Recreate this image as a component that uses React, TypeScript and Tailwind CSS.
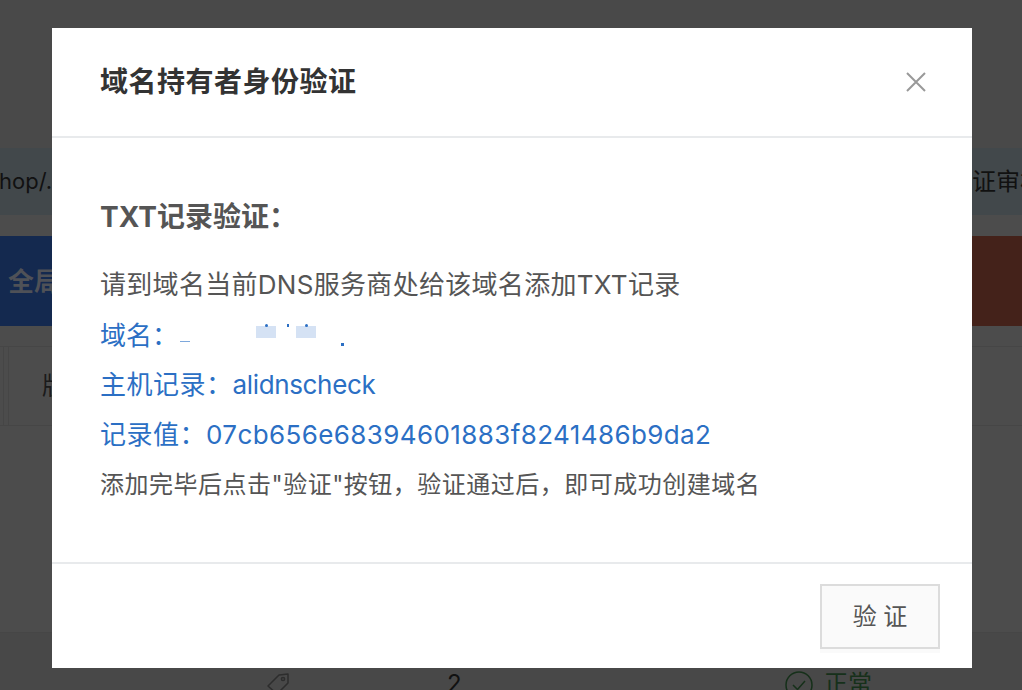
import React from "react";

const FONT = "font-['Inter','Noto_Sans_CJK_SC',sans-serif]";

function Background() {
  return (
    <div className="flex h-[690px] w-[1022px] flex-col overflow-hidden bg-[#4c4c4c]">
      <div className="h-[148px] shrink-0 bg-[#494949]" />
      <div className="flex h-[67px] shrink-0 items-center justify-between overflow-hidden bg-[#42484b] text-[24px] text-[#111]">
        <span className="-ml-[1px] whitespace-nowrap text-[22px]">hop/.</span>
        <span className="w-[50px] shrink-0 whitespace-nowrap">证审核</span>
      </div>
      <div className="h-[21px] shrink-0" />
      <div className="flex h-[90px] shrink-0 items-center justify-between bg-[linear-gradient(90deg,#14294f_0%,#14294f_50%,#44221a_50%,#44221a_100%)]">
        <span className="pl-2 text-[26px] font-bold text-[#4f5157]">全局</span>
      </div>
      <div className="h-[20px] shrink-0" />
      <div className="flex h-[80px] shrink-0 border-y border-[#464646]">
        <div className="w-[4px] border-r border-[#464646]" />
        <div className="ml-[4px] flex w-[100px] items-center border-l border-[#464646] pl-[33px] text-[24px] text-[#1a1a1a]">
          版本
        </div>
      </div>
      <div className="flex-1" />
      <div className="flex h-[58px] shrink-0 items-start border-t border-[#464646] bg-[#484848] pt-[34px] text-[24px] leading-[34px] text-[#111]">
        <svg className="ml-[266px] mt-[5px] h-[24px] w-[24px]" viewBox="0 0 24 24" fill="none" stroke="#2d2d2d" strokeWidth="1.5">
          <path d="M2 14 L13 3 L22 2 L22 11 L11 22 Z" strokeLinejoin="round" />
          <circle cx="17" cy="7" r="1.6" />
        </svg>
        <span className="ml-[157px] w-[27px]">2</span>
        <svg className="ml-[311px] mt-[4px] h-[28px] w-[28px]" viewBox="0 0 28 28" fill="none" stroke="#16301a" strokeWidth="1.5">
          <circle cx="14" cy="14" r="13" />
          <path d="M8 14 L12.5 18.5 L20 10" />
        </svg>
        <span className="ml-[11px] text-[#16301a]">正常</span>
      </div>
    </div>
  );
}

function Modal() {
  return (
    <div className="absolute left-[52px] top-[28px] flex h-[640px] w-[920px] flex-col bg-white">
      <div className="flex h-[110px] shrink-0 items-center justify-between border-b-2 border-[#e8eaec] pl-[48px] pr-[44px]">
        <h2 className="text-[28px] font-bold leading-none tracking-[0.5px] text-[#333]">域名持有者身份验证</h2>
        <svg className="h-[24px] w-[24px]" viewBox="0 0 24 24" fill="none" stroke="#999" strokeWidth="2">
          <path d="M3 3 L21 21 M21 3 L3 21" />
        </svg>
      </div>
      <div className="flex-1 pl-[48px] pt-[61px]">
        <h3 className="h-[40px] text-[28px] font-bold leading-[36px] text-[#555]">TXT记录验证：</h3>
        <p className="mt-[21px] h-[50px] text-[26px] leading-[50px] tracking-[0.3px] text-[#555]">请到域名当前DNS服务商处给该域名添加TXT记录</p>
        <div className="flex h-[50px] items-center text-[26px] text-[#2b6fc4]">
          <span>域名：</span>
          <span className="relative h-[50px] w-[180px]">
            <span className="absolute left-[2px] top-[31px] h-px w-[10px] bg-[#7ea8dc]" />
            <span className="absolute left-[78px] top-[16px] h-[12px] w-[20px] bg-[#d5e2f4]" />
            <span className="absolute left-[118px] top-[16px] h-[12px] w-[20px] bg-[#d5e2f4]" />
            <span className="absolute left-[87px] top-[14px] h-[3px] w-[3px] rounded-full bg-[#2b6fc4]" />
            <span className="absolute left-[109px] top-[14px] h-[3px] w-[2px] bg-[#2b6fc4]" />
            <span className="absolute left-[127px] top-[14px] h-[3px] w-[3px] rounded-full bg-[#2b6fc4]" />
            <span className="absolute left-[163px] top-[33px] h-[3px] w-[3px] bg-[#2b6fc4]" />
          </span>
        </div>
        <p className="h-[50px] text-[26px] leading-[50px] text-[#2b6fc4]">
          <span className="tracking-[0.5px]">主机记录：</span>
          <span className="tracking-[-0.35px]">alidnscheck</span>
        </p>
        <p className="h-[50px] text-[26px] leading-[50px] text-[#2b6fc4]">
          <span className="tracking-[0.5px]">记录值：</span>
          <span className="tracking-[0.4px]">07cb656e68394601883f8241486b9da2</span>
        </p>
        <p className="h-[50px] text-[24px] leading-[50px] tracking-[0.5px] text-[#555]">添加完毕后点击"验证"按钮，验证通过后，即可成功创建域名</p>
      </div>
      <div className="flex h-[106px] shrink-0 justify-end border-t-2 border-[#e8eaec] pr-[32px] pt-[20px]">
        <button className="h-[65px] w-[120px] border-2 border-[#dcdcdc] bg-[#fafafa] text-[24px] text-[#555] shadow-[0_4px_0_#fafafa]">
          验 证
        </button>
      </div>
    </div>
  );
}

export default function App() {
  return (
    <div className={`relative h-[690px] w-[1022px] overflow-hidden ${FONT}`}>
      <Background />
      <Modal />
    </div>
  );
}
